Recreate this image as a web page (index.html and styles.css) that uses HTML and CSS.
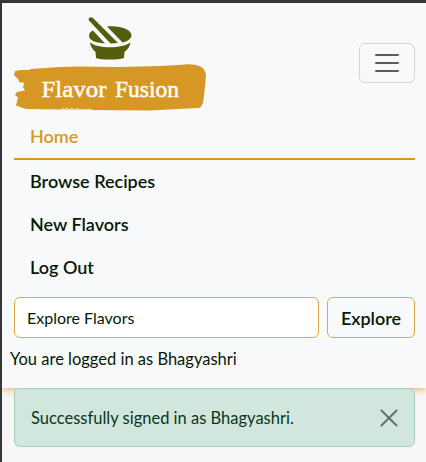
FILE: index.html
```html
<!DOCTYPE html>
<html lang="en">
<head>
<meta charset="utf-8">
<title>Flavor Fusion</title>
<link rel="stylesheet" href="styles.css">
</head>
<body>
<header class="navbar">
  <div class="brand-row">
    <a class="brand" href="#">
      <svg class="logo" viewBox="14 13 194 98" role="img" aria-label="Flavor Fusion">
        <g fill="#555e0d">
          <path d="M89 35Q89 31 93 29.5L105 42.5Q89 41 89 35Z"/>
          <path d="M107 25.5C119 24 131 28 131.500 34C131.500 38 127 40.500 122.500 41.500Z"/>
          <path d="M91 21L115 47" transform="translate(0 -5)"/>
          <path d="M89 19.500C87.500 17 90.500 15 93 17L118 42L110.500 42.500Z"/>
          <path d="M89.800 41.500C98 47.800 122 47.800 130.500 41.500Q129.500 47 124.500 51L124 57Q119 58.500 110 58.500Q100 58.500 96 57L95.500 51Q91 47 89.800 41.500Z"/>
        </g>
        <path fill="#d79724" d="M15 70L21 69L29 69L31 68L59 66L78 65.500L120 66L160 65L185 63.500C197 62.500 206 66 206 75L204 95Q203.500 105 199 107L178 108L150 109.500L89 109L60 108.500L26 108L16 104.500L18 96.500L15 94L17 91L25 89.500L23 86L24.500 82L19 81L18 78L14 74Z"/>
        <g class="logo-text">
          <text x="41.500" y="95.500" textLength="65" lengthAdjust="spacingAndGlyphs">Flavor</text>
          <text x="115" y="95.500" textLength="64" lengthAdjust="spacingAndGlyphs">Fusion</text>
        </g>
        <path fill="none" stroke="#f8f9fb" stroke-width=".8" d="M61 108.500l2-1 2 1.500 2-2 2 2 3-2 2 2 3-1.500 3 1.500 3-1 3 1 3-1 3 1"/>
      </svg>
    </a>
    <button class="toggler" aria-label="Toggle navigation">
      <svg width="30" height="30" viewBox="0 0 30 30"><path d="M4 7h22M4 15h22M4 23h22" stroke="#5a595f" stroke-width="2" stroke-linecap="round" stroke-miterlimit="10"/></svg>
    </button>
  </div>
  <nav class="links">
    <a class="link active" href="#">Home</a>
    <a class="link" href="#">Browse Recipes</a>
    <a class="link" href="#">New Flavors</a>
    <a class="link" href="#">Log Out</a>
  </nav>
  <form class="search">
    <input class="field" type="search" placeholder="Explore Flavors">
    <button class="explore" type="button">Explore</button>
  </form>
  <p class="status">You are logged in as Bhagyashri</p>
</header>
<main class="messages">
  <div class="alert">
    <span>Successfully signed in as Bhagyashri.</span>
    <button class="close" aria-label="Close">
      <svg width="18" height="18" viewBox="0 0 18 18"><path d="M1.500 1.500l15 15M16.500 1.500l-15 15" stroke="#68736e" stroke-width="2.100" stroke-linecap="round"/></svg>
    </button>
  </div>
</main>
</body>
</html>
```
FILE: styles.css
```css
* {
  box-sizing: border-box;
}

body {
  margin: 0;
  height: 462px;
  overflow: hidden;
  border-top: 3px solid #373537;
  border-left: 2px solid #373537;
  background: #f7f7f7;
  color: #071a07;
  font-family: Lato, sans-serif;
  font-size: 16.500px;
  line-height: 24px;
}

.navbar {
  height: 385px;
  padding: 10px 11px 0 12px;
  background: #f8f9fb;
  box-shadow: 0 2px 7px rgba(231, 151, 36, .65);
}

.brand-row {
  display: flex;
  align-items: center;
  justify-content: space-between;
  height: 100px;
}

.brand,
.logo {
  display: block;
  width: 194px;
  height: 98px;
}

.logo-text {
  fill: #fffdf5;
  stroke: #fffdf5;
  stroke-width: .5;
  font-family: "Liberation Serif", serif;
  font-size: 24px;
}

.toggler {
  display: flex;
  align-items: center;
  justify-content: center;
  width: 56px;
  height: 40px;
  padding: 0;
  border: 1px solid #d2d4d6;
  border-radius: 6px;
  background: transparent;
}

.links {
  display: flex;
  flex-direction: column;
  margin-top: 2px;
}

.link {
  height: 43px;
  padding: 8px 16px;
  color: #071a07;
  font-size: 18px;
  font-weight: 600;
  line-height: 27px;
  text-decoration: none;
}

.link.active {
  height: 45px;
  border-bottom: 2px solid #d79724;
  color: #d79724;
}

.search {
  display: flex;
  gap: 8px;
  margin-top: 8px;
}

.field,
.explore {
  height: 41px;
  border: 1px solid #e4a73a;
  border-radius: 6px;
  color: #071a07;
  font-family: inherit;
}

.field {
  flex: 1;
  min-width: 0;
  padding: 0 12px;
  background: #fff;
  font-size: 16px;
}

.field::placeholder {
  color: #071a07;
}

.explore {
  width: 88px;
  padding: 0;
  background: transparent;
  font-size: 18px;
  font-weight: 600;
}

.status {
  margin: 9px 0 0 -4px;
}

.messages {
  position: relative;
  padding: 0 11px 0 12px;
}

.alert {
  display: flex;
  align-items: center;
  justify-content: space-between;
  height: 59px;
  padding: 0 16px;
  border: 1px solid #a3cfbb;
  border-radius: 6px;
  background: #d1e7dd;
  color: #0a3622;
}

.close {
  display: flex;
  padding: 0;
  border: 0;
  background: transparent;
}
```
